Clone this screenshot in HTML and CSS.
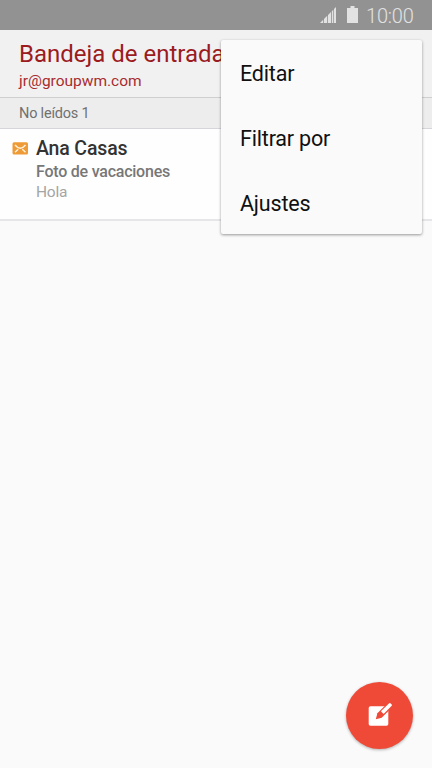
FILE: index.html
```html
<!DOCTYPE html>
<html lang="es">
<head>
<meta charset="utf-8">
<title>Bandeja de entrada</title>
<link rel="stylesheet" href="styles.css">
</head>
<body>
<div class="screen">
  <div class="status">
    <svg class="signal" width="17" height="17" viewBox="0 0 17 17"><path d="M0 16 3.200 12.800V16zM4 12 7.200 8.800V16H4zM8 8 11 5V16H8zM11.800 4.200 13.300 2.700V16H11.800zM14 2 16 0V16H14z"/></svg>
    <svg class="battery" width="11" height="17" viewBox="0 0 11 17"><path d="M3.500 0h4v2H11v15H0V2h3.500z"/></svg>
    <span class="clock">10:00</span>
  </div>
  <header class="header">
    <h1 class="title">Bandeja de entrada</h1>
    <p class="account">jr@groupwm.com</p>
  </header>
  <div class="section">No leídos 1</div>
  <article class="mail">
    <svg class="envelope" width="16" height="13" viewBox="0 0 16 13"><rect x=".5" y=".2" width="15.500" height="12.200" rx="1.500" fill="#ee9a36"/><path d="M3 3Q8.200 9.400 13.500 3M3 10.200 6.200 7.200M13.500 10.200 10.300 7.200" fill="none" stroke="#fff3dd" stroke-width="1.400"/></svg>
    <div class="mail-body">
      <h2 class="sender">Ana Casas</h2>
      <p class="subject">Foto de vacaciones</p>
      <p class="preview">Hola</p>
    </div>
  </article>
  <nav class="menu">
    <span class="item">Editar</span>
    <span class="item">Filtrar por</span>
    <span class="item">Ajustes</span>
  </nav>
  <div class="compose">
    <svg width="26" height="26" viewBox="0 0 26 26"><rect x="2.700" y="4.200" width="19.600" height="19.600" rx="1.800" fill="#fff"/><path d="M9.800 17.200 11.400 11.300 22.600 0 27 4.400 15.700 15.700z" fill="#ef4a38"/><path d="M14.900 9.300 23.200 1.200Q23.800.6 24.400 1.200L25.700 2.500Q26.300 3.100 25.700 3.700L17.600 12z" fill="#fff"/></svg>
  </div>
</div>
</body>
</html>
```
FILE: styles.css
```css
* { box-sizing: border-box; }
body { margin: 0; font-family: Roboto, sans-serif; }
h1, h2, p { margin: 0; font-weight: 400; }
.screen { position: relative; width: 432px; height: 768px; background: #fafafa; overflow: hidden; }
.status { height: 30px; background: #929292; display: flex; justify-content: flex-end; padding: 6px 19px 0 0; color: #e2e2e2; }
.status svg { fill: #e2e2e2; }
.signal { margin: 1px 10px 0 0; }
.battery { margin-right: 8px; }
.clock { width: 47px; font-size: 20px; line-height: 20px; font-weight: 300; letter-spacing: -.2px; white-space: nowrap; }
.header { height: 68px; background: #f1f1f1; border-bottom: 1px solid #cfcfcf; padding: 9px 0 0 19px; }
.title { font-size: 24px; line-height: 30px; color: #9b1b1e; }
.account { font-size: 15.500px; line-height: 20px; margin-top: 2px; color: #a82c30; }
.section { height: 31px; background: #ededed; border-bottom: 1px solid #d5d5da; padding: 1px 0 0 19px; font-size: 14.500px; letter-spacing: -.2px; line-height: 29px; color: #707070; }
.mail { height: 92px; background: #fefefe; border-bottom: 2px solid #e6e6e8; display: flex; padding: 8px 0 0 12px; }
.envelope { margin: 5px 8px 0 0; }
.sender { font-size: 19.500px; line-height: 24px; font-weight: 500; letter-spacing: -.15px; color: #333; }
.subject { font-size: 16px; line-height: 22px; font-weight: 500; letter-spacing: -.23px; color: #777; }
.preview { font-size: 15.500px; line-height: 19px; letter-spacing: -.2px; color: #a5a5a5; }
.menu { position: absolute; left: 221px; top: 40px; width: 201px; height: 194px; background: #fafafa; border-radius: 2px; box-shadow: 0 1px 3px rgba(0,0,0,.4); display: flex; flex-direction: column; padding-top: 1px; }
.item { height: 65px; flex: none; line-height: 66px; padding-left: 19px; font-size: 21.500px; letter-spacing: -.18px; color: #101010; }
.compose { position: absolute; left: 345.500px; top: 681.500px; width: 67px; height: 67px; border-radius: 50%; background: #ef4a38; box-shadow: 0 1px 3px rgba(0,0,0,.3); }
.compose svg { display: block; margin: 20.500px 0 0 20.500px; overflow: visible; }
```
